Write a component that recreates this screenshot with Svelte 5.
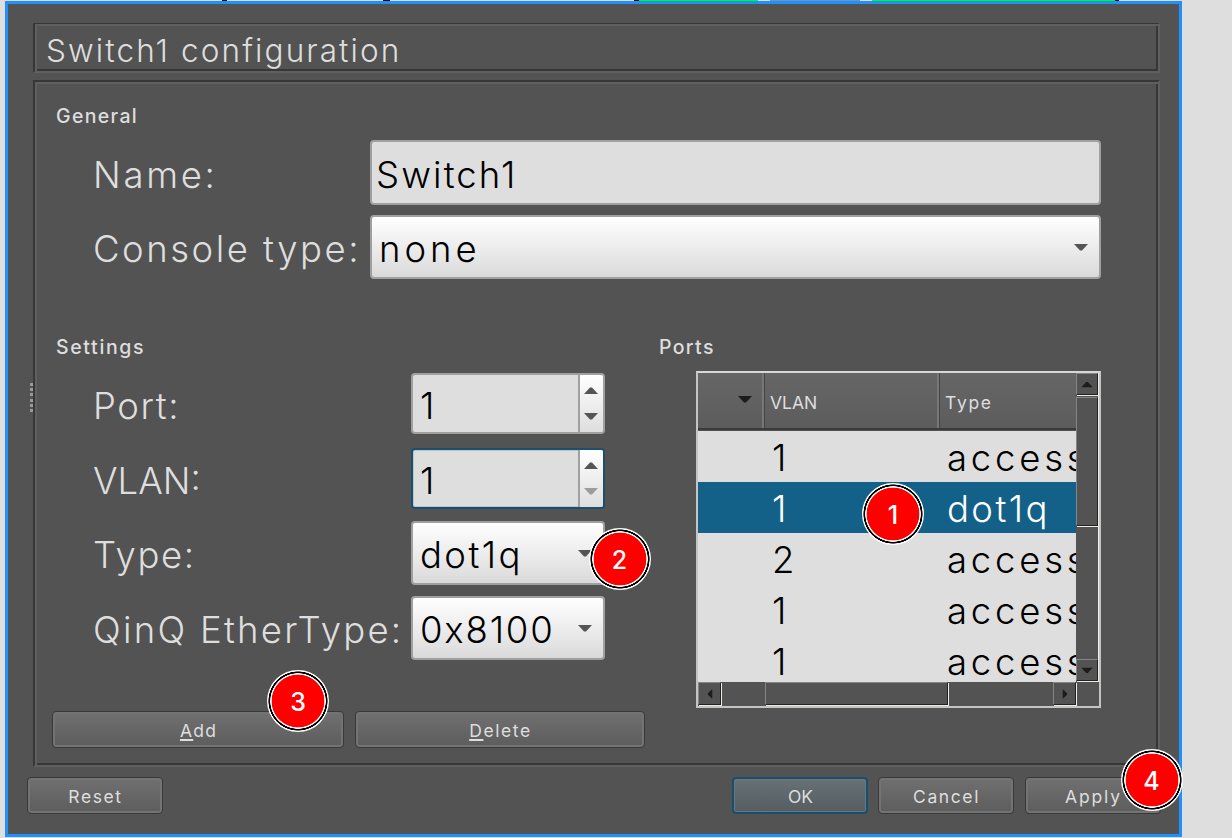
<script>
  const rows = [
    { vlan: '1', type: 'access' },
    { vlan: '1', type: 'dot1q', selected: true },
    { vlan: '2', type: 'access' },
    { vlan: '1', type: 'access' },
    { vlan: '1', type: 'access' }
  ];
</script>

{#snippet arrow(dir, tone)}
  <svg class="arrow" class:side={dir === 'left' || dir === 'right'} viewBox={dir === 'left' || dir === 'right' ? '0 0 6 12' : '0 0 14 7'} fill={tone}>
    {#if dir === 'down'}<path d="M0 0H14L8 6.5H6Z" />{/if}
    {#if dir === 'up'}<path d="M0 7H14L8 .5H6Z" />{/if}
    {#if dir === 'left'}<path d="M6 0V12L.5 7V5Z" />{/if}
    {#if dir === 'right'}<path d="M0 0V12L5.5 7V5Z" />{/if}
  </svg>
{/snippet}

<div class="desktop">
  <div class="backdrop"><i class="k k1"></i><i class="k k2"></i><i class="k g1"></i><i class="k b1"></i><i class="k g2"></i></div>
  <main class="window">
    <header class="title groove"><span>Switch1 configuration</span></header>
    <section class="panel groove">
      <h2 class="t-general"><span>General</span></h2>
      <div class="general">
        <div class="line"><span class="label l-name">Name:</span><div class="field text wide"><span class="v-name">Switch1</span></div></div>
        <div class="line"><span class="label l-console">Console type:</span><div class="field combo wide"><span class="v-none">none</span>{@render arrow('down', '#555')}</div></div>
      </div>
      <div class="columns">
        <div class="settings">
          <h2 class="t-settings"><span>Settings</span></h2>
          <div class="line spinline"><span class="label l-port">Port:</span><div class="field spin"><span>1</span><div class="steps">{@render arrow('up', '#555')}{@render arrow('down', '#555')}</div></div></div>
          <div class="line spinline second"><span class="label l-vlan">VLAN:</span><div class="field spin focus"><span>1</span><div class="steps">{@render arrow('up', '#555')}{@render arrow('down', '#9c9c9c')}</div></div></div>
          <div class="line"><span class="label l-type">Type:</span><div class="field combo"><span class="v-dot">dot1q</span>{@render arrow('down', '#555')}</div></div>
          <div class="line"><span class="label l-qinq">QinQ EtherType:</span><div class="field combo"><span class="v-hex">0x8100</span>{@render arrow('down', '#555')}</div></div>
          <div class="actions">
            <button><span class="b-add"><u>A</u>dd</span></button>
            <button><span class="b-delete"><u>D</u>elete</span></button>
          </div>
        </div>
        <div class="ports">
          <h2 class="t-ports"><span>Ports</span></h2>
          <div class="table">
            <div class="view">
              <div class="head">
                <div class="c0">{@render arrow('down', '#1c1c1c')}</div>
                <div class="c1"><span class="h-vlan">VLAN</span></div>
                <div class="c2"><span class="h-type">Type</span></div>
              </div>
              {#each rows as r}
                <div class="row" class:selected={r.selected}>
                  <span class="vlan">{r.vlan}</span><span class="type" class:dot={r.selected}>{r.type}</span>
                </div>
              {/each}
            </div>
            <div class="vbar">
              <div class="cap">{@render arrow('up', '#1c1c1c')}</div>
              <div class="thumb"></div>
              <div class="cap last">{@render arrow('down', '#1c1c1c')}</div>
            </div>
            <div class="hbar">
              <div class="cap">{@render arrow('left', '#1c1c1c')}</div>
              <div class="thumb"></div>
              <div class="cap last">{@render arrow('right', '#1c1c1c')}</div>
            </div>
          </div>
        </div>
      </div>
    </section>
    <footer>
      <button><span class="b-reset">Reset</span></button>
      <button class="primary"><span class="b-ok">OK</span></button>
      <button><span class="b-cancel">Cancel</span></button>
      <button><span class="b-apply">Apply</span></button>
    </footer>
    <div class="grip"></div>
  </main>
  <div class="badge n1">1</div>
  <div class="badge n2">2</div>
  <div class="badge n3">3</div>
  <div class="badge n4">4</div>
</div>

<style>
  :global(body) { margin: 0; background: #dedede; }
  .desktop, .desktop * { box-sizing: border-box; }
  .desktop { position: relative; width: 1232px; height: 838px; padding: 1px 0 0 5px; overflow: hidden; background: #dedede; font-family: Inter, "Liberation Sans", sans-serif; font-weight: 300; color: #dedede; white-space: nowrap; }
  .backdrop { position: absolute; left: 0; top: 0; width: 1232px; height: 1px; }
  .k { position: absolute; top: 0; height: 1px; background: #000; }
  .k1 { left: 222px; width: 5px; }
  .k2 { left: 383px; width: 7px; }
  .g1 { left: 634px; width: 124px; background: #0f0; border-left: 5px solid #000; }
  .b1 { left: 770px; width: 90px; background: #7094b4; }
  .g2 { left: 872px; width: 247px; background: #0f0; border-right: 4px solid #000; }
  .window { position: relative; width: 1177px; height: 836px; border: 3px solid #1e90ff; background: #535353; padding: 19px 0 0 25px; }
  .groove { width: 1127px; border: 2px solid; border-color: #373737 #5f5f5f #5f5f5f #373737; box-shadow: inset 2px 2px #5f5f5f, inset -2px -2px #373737; }
  .title { height: 50px; border-top-width: 1px; padding: 3px 0 0 11px; font-size: 31.5px; line-height: 48px; letter-spacing: 2.1px; }
  .panel { height: 687px; margin-top: 7px; padding-top: 22px; }
  h2 { margin: 0; height: 24px; line-height: 24px; font-size: 19.5px; font-weight: 500; padding-left: 21px; letter-spacing: 1.35px; }
  .t-settings { letter-spacing: 1.65px; }
  .t-ports { padding-left: 0; }
  .general { padding: 12px 0 0; display: flex; flex-direction: column; gap: 10px; }
  .line { display: flex; justify-content: space-between; height: 65px; padding-left: 58px; }
  .line + .line { height: 64px; }
  .general .line { width: 1066px; }
  .label, .field > span { font-size: 36.5px; line-height: 69px; height: 64px; }
  .general .l-name { line-height: 71px; }
  .label { width: 0; flex: none; }
  .field { width: 194px; height: 100%; border: 2px solid #a0a0a0; border-radius: 4px; background: #dedede; color: #000; display: flex; align-items: center; justify-content: space-between; padding: 0 11px 0 7px; overflow: hidden; }
  .wide { width: 731px; }
  .text { padding-left: 4px; }
  .combo { background: linear-gradient(#fff, #dadada); }
  .l-name { letter-spacing: 2.7px; }
  .l-console { letter-spacing: 2.5px; }
  .l-port, .l-type { letter-spacing: 1.6px; }
  .l-qinq { letter-spacing: 2.25px; }
  .v-name { letter-spacing: 2.1px; }
  .v-none { letter-spacing: 4px; }
  .v-dot { letter-spacing: 2.4px; }
  .v-hex { letter-spacing: 1.8px; }
  .arrow { width: 14px; height: 7px; flex: none; }
  .side { width: 6px; height: 12px; }
  .columns { display: flex; height: 413px; margin-top: 56px; }
  .settings { width: 624px; }
  .settings .line { width: 570px; margin-top: 11px; }
  .settings .spinline { height: 61px; margin-top: 14px; }
  .spinline .label, .spin > span { line-height: 66px; height: 61px; }
  .settings .second { margin: 14px 0 12px; }
  .spin { padding: 0; }
  .spin > span { padding-left: 7px; }
  .focus { border-color: #1b4f6c; box-shadow: inset 0 0 0 1px #b7c7d2; }
  .steps { width: 25px; height: 57px; border-left: 2px solid #a0a0a0; background: linear-gradient(#fff, #dedede); display: flex; flex-direction: column; align-items: flex-start; gap: 19px; padding: 12px 0 0 4px; }
  .actions { display: flex; gap: 11px; padding: 51px 0 0 17px; }
  button { font: 400 17.5px/34px Inter, sans-serif; letter-spacing: 1.6px; color: #dedede; border: 1px solid #393939; border-radius: 4px; background: linear-gradient(#707070, #5d5d5d); box-shadow: inset 0 0 0 2px #737373; height: 37px; padding: 2px 0 0 1px; display: block; flex: none; }
  .b-add { letter-spacing: 1.2px; }
  .b-ok { letter-spacing: 0; }
  .b-apply { letter-spacing: 1.9px; }
  .actions button { width: 292px; }
  .actions button + button { width: 290px; }
  u { text-underline-offset: 2px; text-decoration-thickness: 2px; }
  .ports { margin-left: 0; width: 442px; }
  .t-ports { margin-left: 0; }
  .table { margin: 12px 0 0 37px; width: 405px; height: 337px; border: 2px solid #c4c4c4; border-top-color: #d8d8d8; display: grid; grid-template: 309px 24px / 378px 23px; }
  .view { overflow: hidden; background: #dedede; }
  .head { height: 58px; background: linear-gradient(#666, #5c5c5c); display: flex; border-bottom: 1px solid #535353; box-shadow: inset 0 -2px #3b3b3b; font-size: 17.5px; line-height: 59px; font-weight: 400; }
  .head > div { flex: none; height: 55px; border-right: 2px solid #777; }
  .head .c0 { width: 66px; padding-right: 10px; display: flex; align-items: center; justify-content: flex-end; padding-bottom: 3px; }
  .head .c1 { width: 175px; padding-left: 5px; border-left: 1px solid #454545; }
  .head .c2 { width: 160px; padding-left: 5px; border-left: 1px solid #454545; }
  .h-type { letter-spacing: 1.7px; }
  .row { height: 51px; font-size: 36.5px; line-height: 55px; color: #000; display: flex; padding-left: 74px; }
  .row.selected { background: #136089; color: #fff; }
  .vlan { width: 175px; flex: none; }
  .type { letter-spacing: 3.8px; }
  .type.dot { letter-spacing: 2.4px; }
  .vbar, .hbar { background: #535353; }
  .vbar { border-right: 1px solid #f0eee8; }
  .hbar { display: flex; width: 401px; }
  .cap, .thumb { border: 1px solid #858585; border-right-color: #222; border-bottom-color: #222; box-shadow: 1px 1px #efece6; }
  .vbar .cap { height: 22px; width: 22px; display: grid; place-items: center; }
  .vbar .arrow, .hbar .arrow { transform: scale(.84); }
  .vbar .thumb { width: 22px; height: 129px; margin-top: 2px; }
  .vbar .last { margin-top: 133px; }
  .hbar .cap { width: 23px; height: 23px; display: grid; place-items: center; }
  .hbar .thumb { width: 183px; height: 23px; margin-left: 44px; }
  .hbar .last { margin-left: 105px; }
  footer { display: flex; margin: 10px 0 0 -6px; }
  footer button { width: 136px; margin-right: 11px; }
  footer button:first-child { margin-right: 569px; }
  footer button:nth-child(2) { margin-right: 10px; }
  .primary { border: 2px solid #174f70; background: linear-gradient(#677176, #555d60); box-shadow: inset 0 0 0 1px #6b777c; line-height: 32px; }
  .grip { position: absolute; left: 22px; top: 379px; width: 3px; height: 29px; background: repeating-linear-gradient(#999 0 3px, #535353 3px 5.2px); }
  .badge { position: absolute; width: 62px; height: 62px; border-radius: 50%; background: radial-gradient(circle, #f00 26px, #fff 26.7px 27.5px, #000 28px 29.3px, #fff 29.8px); color: #fff; font: 500 25px/64px Inter, sans-serif; text-align: center; }
  .n1 { left: 862px; top: 483px; }
  .n2 { left: 588.5px; top: 527.5px; }
  .n3 { left: 267px; top: 670px; }
  .n4 { left: 1120.5px; top: 748.5px; }
</style>
